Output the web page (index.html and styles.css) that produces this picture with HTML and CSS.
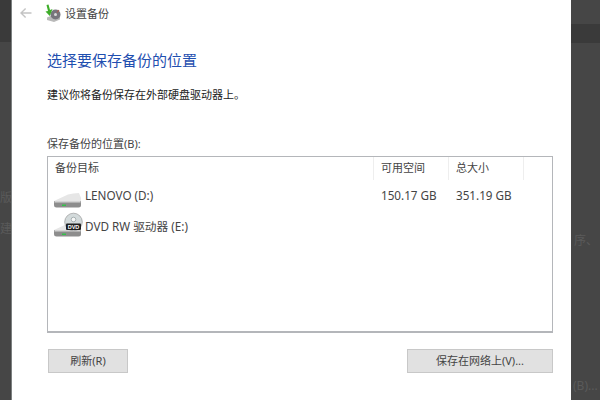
FILE: index.html
```html
<!DOCTYPE html>
<html lang="zh">
<head>
<meta charset="utf-8">
<title>设置备份</title>
<link rel="stylesheet" href="styles.css">
</head>
<body>
<div class="page">
  <aside class="side side-left">
    <div class="band band-left"></div>
    <div class="ghost ghost-l1">版</div>
    <div class="ghost ghost-l2">建</div>
  </aside>
  <main class="dialog">
    <header class="titlebar">
      <svg class="back" width="12" height="12" viewBox="0 0 12 12"><path d="M11.500 6H1.200M5.600 1.400 1 6l4.600 4.600" fill="none" stroke="#c4c4c4" stroke-width="1.400"/></svg>
      <svg class="appicon" width="16" height="18" viewBox="0 0 16 18">
        <path d="M2 13.500 8 11l7 2v2.500L9 18l-7-2z" fill="#b9b9b9"/>
        <circle cx="10.500" cy="10.500" r="5" fill="#77757c"/>
        <circle cx="10.500" cy="10.500" r="1.500" fill="#d8d8d8"/>
        <path d="M12 8.500 14 6" stroke="#a85a50" stroke-width="1.200"/>
        <path d="M1.500 1 3.500 0.500 5 6 7.500 5 4.800 12 0.500 7.600 3 7z" fill="#3fae2a"/>
      </svg>
      <span class="title">设置备份</span>
    </header>
    <section class="content">
      <h1 class="heading">选择要保存备份的位置</h1>
      <p class="desc">建议你将备份保存在外部硬盘驱动器上。</p>
      <label class="label">保存备份的位置(B):</label>
      <div class="list">
        <div class="row head">
          <div class="col c-name">备份目标</div>
          <div class="col c-free">可用空间</div>
          <div class="col c-size">总大小</div>
          <div class="col c-rest"></div>
        </div>
        <div class="row item item-d">
          <div class="col c-name name">
            <svg class="drive" width="30" height="18" viewBox="0 0 30 18">
              <path d="M1 11 15 4.500Q20 3 26 3l2 5v5H1z" fill="#e6e6e6"/>
              <path d="M1 11h27v4q0 2.500-2.500 2.500h-22Q1 17.500 1 15z" fill="#8d8d8d"/>
              <path d="M1.500 11h26v1.500h-26z" fill="#d4d4d4"/>
              <path d="M9 14.500h4V16H9z" fill="#35c04a"/>
            </svg>
            <span>LENOVO (D:)</span>
          </div>
          <div class="col c-free">150.17 GB</div>
          <div class="col c-size">351.19 GB</div>
        </div>
        <div class="row item item-e">
          <div class="col c-name name">
            <svg class="drive dvd" width="30" height="30" viewBox="0 0 30 30">
              <path d="M1 18 15 11.500Q20 10 26 10l2 5v5H1z" fill="#e6e6e6"/>
              <path d="M1 18h27v4q0 2.500-2.500 2.500h-22Q1 24.500 1 22z" fill="#8d8d8d"/>
              <path d="M1.500 18h26v1.500h-26z" fill="#d4d4d4"/>
              <path d="M9 21.500h4V23H9z" fill="#35c04a"/>
              <circle cx="20.500" cy="10" r="8.800" fill="#d3dadb" stroke="#9a9a9a" stroke-width=".7"/>
              <circle cx="20.500" cy="7.500" r="2.300" fill="#f7f7f7" stroke="#8f9c9c" stroke-width=".7"/>
              <rect x="13" y="11.500" width="15" height="6.500" rx="1" fill="#1e1e1e"/>
              <text class="dvd-label" x="20.500" y="16.800" text-anchor="middle">DVD</text>
            </svg>
            <span>DVD RW 驱动器 (E:)</span>
          </div>
          <div class="col c-free"></div>
          <div class="col c-size"></div>
        </div>
      </div>
      <div class="actions">
        <button class="btn btn-refresh" type="button">刷新(R)</button>
        <button class="btn btn-network" type="button">保存在网络上(V)...</button>
      </div>
    </section>
  </main>
  <aside class="side side-right">
    <div class="band band-right"></div>
    <div class="ghost ghost-r1">序、</div>
    <div class="ghost ghost-r2">(B)...</div>
  </aside>
</div>
</body>
</html>
```
FILE: styles.css
```css
* { box-sizing: border-box; }
html, body { margin: 0; padding: 0; }
body {
  width: 600px;
  height: 400px;
  overflow: hidden;
  font-family: "Noto Sans", "Noto Sans CJK SC", sans-serif;
  font-size: 11px;
  color: #333;
  background: #464646;
}
.page { display: flex; width: 600px; height: 400px; }

.side { height: 400px; background: #464646; overflow: hidden; display: flex; flex-direction: column; }
.side-left { width: 12px; border-right: 1px solid #7c8080; align-items: flex-end; }
.side-right { width: 29px; }
.band { flex: none; }
.band-left { width: 100%; height: 42px; background: #3a3a3a; margin-bottom: 147px; }
.band-right { width: 100%; height: 19px; background: #3a3a3a; margin-top: 24px; margin-bottom: 189px; }
.ghost { color: #5a5a5a; font-size: 12px; line-height: 18px; white-space: nowrap; }
.ghost-l1 { margin-right: -1px; }
.ghost-l2 { margin-top: 13px; margin-right: -1px; }
.ghost-r1 { margin-left: 3px; }
.ghost-r2 { margin-top: 127px; margin-left: 2px; }

.dialog { width: 559px; height: 400px; background: #fff; }
.titlebar { display: flex; align-items: center; height: 26px; padding-left: 8px; }
.back { flex: none; }
.appicon { flex: none; margin-left: 13px; }
.title { margin-left: 4px; color: #444; }

.content { padding: 0 18px 0 35px; }
.heading { margin: 24px 0 0; font-size: 15px; line-height: 20px; font-weight: 400; color: #1f4fb0; }
.desc { margin: 17px 0 0; line-height: 16px; color: #222; }
.label { display: block; margin-top: 33px; line-height: 16px; color: #444; }

.list { width: 506px; height: 177px; margin-top: 4px; border: 1px solid #b4b6ba; border-bottom-width: 2px; }
.row { display: flex; }
.col { padding-left: 7px; white-space: nowrap; }
.c-name { width: 326px; }
.c-free { width: 75px; }
.c-size { width: 75px; }
.c-rest { width: 28px; }
.head { height: 23px; line-height: 22px; color: #444; }
.head .col { border-right: 1px solid #eee; }
.head .c-rest { border-right: 0; }
.item { color: #444; font-size: 11.7px; }
.name { display: flex; }
.item-d { height: 31px; margin-top: 6px; line-height: 18px; }
.item-e { height: 30px; line-height: 18px; }
.drive { flex: none; margin-left: -2px; }
.drive + span { margin-left: 2px; }
.item-d .drive { margin-top: 4px; }
.item-e .dvd { margin-top: -5px; }
.dvd-label { font-family: "Liberation Sans", sans-serif; font-size: 5.500px; font-weight: 700; fill: #fff; }

.actions { display: flex; justify-content: space-between; width: 505px; margin: 16px 0 0 1px; }
.btn {
  height: 24px;
  padding: 0;
  font: inherit;
  line-height: 20px;
  color: #444;
  background: #e1e1e1;
  border: 1px solid #c8c8c8;
}
.btn-refresh { width: 80px; }
.btn-network { width: 146px; }
```
